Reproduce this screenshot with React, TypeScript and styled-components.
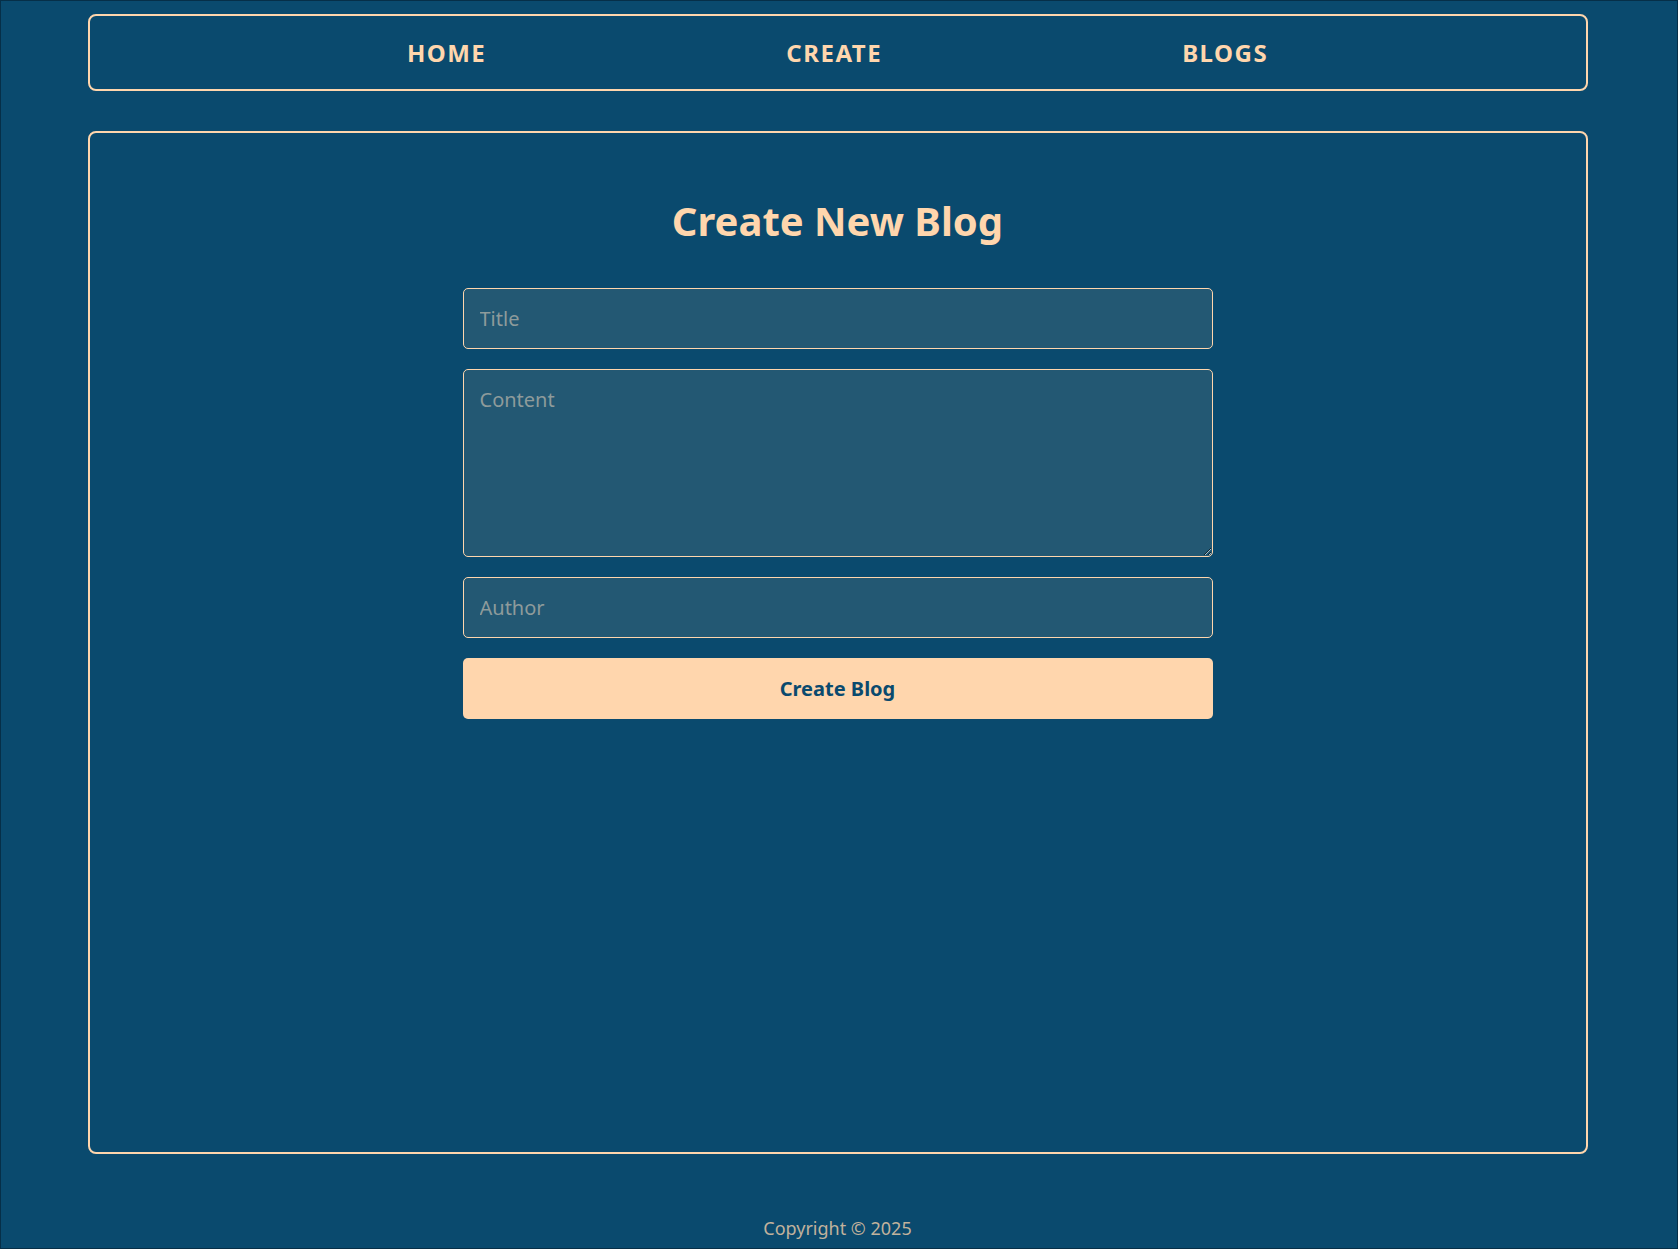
import React from "react";
import styled, {createGlobalStyle} from "styled-components";

const navy = "#0a4a6e";
const peach = "#ffd6ad";

const GlobalStyle = createGlobalStyle`
  * {
    box-sizing: border-box;
  }

  html, body {
    margin: 0;
    padding: 0;
    background: ${navy};
  }

  body {
    font-family: "Noto Sans", "Open Sans", sans-serif;
    color: ${peach};
  }
`

const Page = styled.div`
  display: flex;
  flex-direction: column;
  min-height: 100vh;
  padding: 13px 3px 0 0;
  border: 1px solid #062f48;
  background: ${navy};
`

const NavBar = styled.nav`
  width: 1500px;
  margin: 0 auto;
  padding: 20px 0;
  border: 2px solid ${peach};
  border-radius: 8px;
`

const NavList = styled.ul`
  display: flex;
  justify-content: center;
  gap: 300px;
  list-style: none;
  margin: 0;
  padding: 0;
`

const NavLink = styled.a`
  display: block;
  color: ${peach};
  font-size: 24px;
  font-weight: 700;
  letter-spacing: 1.5px;
  text-transform: uppercase;
  text-decoration: none;
  cursor: pointer;

  &:hover, &:focus {
    text-decoration: underline;
  }
`

const Main = styled.main`
  flex: 1;
  width: 1500px;
  margin: 40px auto 0;
  padding: 60px 0;
  border: 2px solid ${peach};
  border-radius: 8px;
`

const Heading = styled.h2`
  margin: 0 0 40px;
  font-size: 40px;
  font-weight: 700;
  text-align: center;
  color: ${peach};
`

const Form = styled.form`
  display: flex;
  flex-direction: column;
  gap: 20px;
  width: 750px;
  margin: 0 auto;
`

const fieldStyles = `
  width: 100%;
  padding: 16px;
  border: 1px solid ${peach};
  border-radius: 5px;
  background: #235873;
  color: ${peach};
  font-family: "Noto Sans", "Open Sans", sans-serif;
  font-size: 20px;
  outline: none;

  &::placeholder {
    color: #8e9b9b;
  }
`

const Input = styled.input`
  ${fieldStyles}
`

const TextArea = styled.textarea`
  ${fieldStyles}
  display: block;
  height: 188px;
  resize: vertical;
`

const SubmitButton = styled.button`
  height: 61px;
  border: none;
  border-radius: 5px;
  background: ${peach};
  color: ${navy};
  font-family: "Noto Sans", "Open Sans", sans-serif;
  font-size: 20px;
  font-weight: 700;
  cursor: pointer;
`

const Footer = styled.footer`
  margin-top: 62px;
  padding-bottom: 8px;
  text-align: center;
  font-size: 18px;
  color: rgba(255, 214, 173, 0.75);
`

const links = ["Home", "Create", "Blogs"];

export default function App() {
  return (
    <>
      <GlobalStyle/>
      <Page>
        <NavBar>
          <NavList>
            {links.map(link => (
              <li key={link}>
                <NavLink href="#">{link}</NavLink>
              </li>
            ))}
          </NavList>
        </NavBar>

        <Main>
          <Heading>Create New Blog</Heading>
          <Form onSubmit={e => e.preventDefault()}>
            <Input type="text" placeholder="Title"/>
            <TextArea placeholder="Content"/>
            <Input type="text" placeholder="Author"/>
            <SubmitButton type="submit">Create Blog</SubmitButton>
          </Form>
        </Main>

        <Footer>Copyright © 2025</Footer>
      </Page>
    </>
  )
}
